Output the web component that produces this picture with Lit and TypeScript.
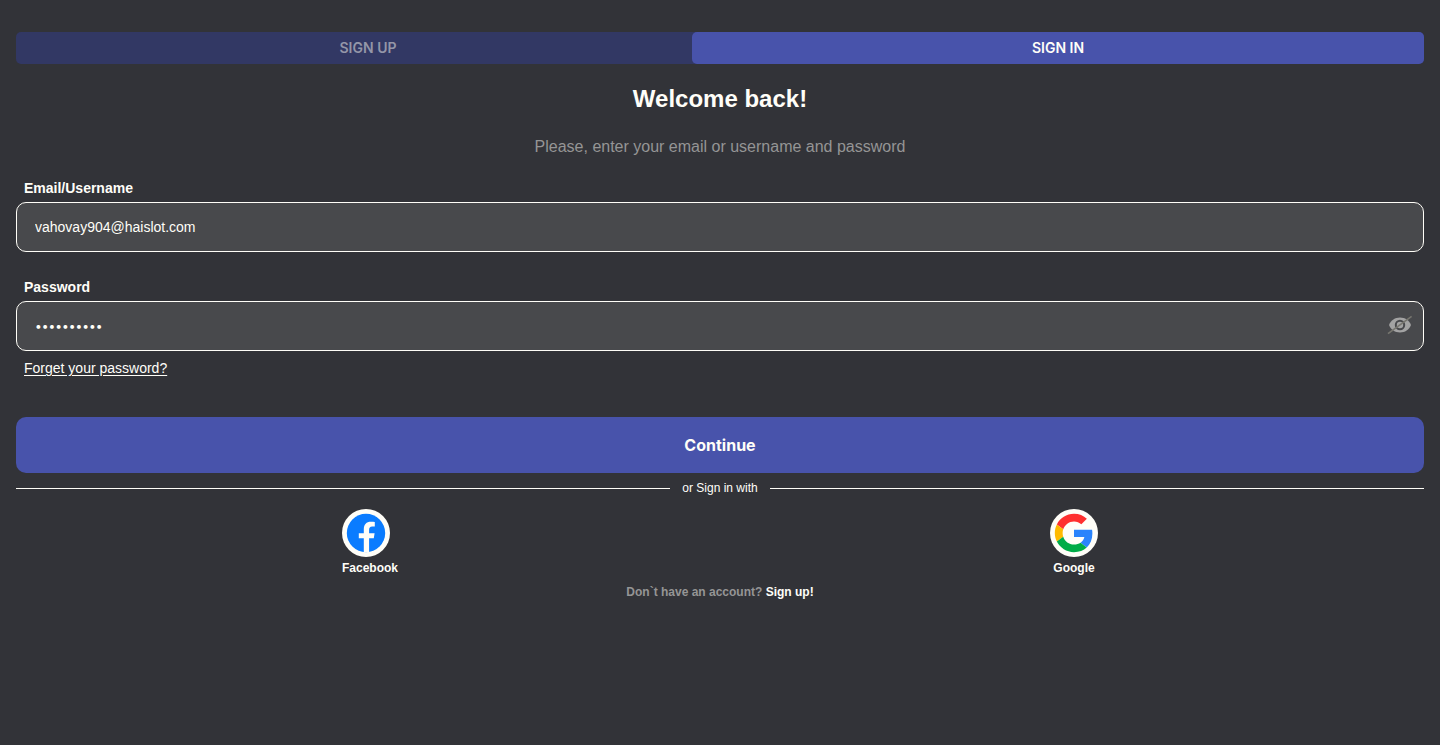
import { LitElement, html, css } from "lit";
import { customElement, state } from "lit/decorators.js";

@customElement("app-root")
export class AppRoot extends LitElement {
  @state() private passwordVisible = false;

  static styles = css`
    :host {
      display: block;
      box-sizing: border-box;
      min-height: 100vh;
      padding: 32px 16px;
      background: #323338;
      color: #fffef8;
      font-family: "Liberation Sans", Arial, sans-serif;
      font-size: 14px;
      line-height: 16px;
    }
    * {
      box-sizing: border-box;
    }
    button,
    input {
      margin: 0;
      padding: 0;
      border: 0;
      background: none;
      color: inherit;
      font-family: Inter, sans-serif;
      font-size: 14px;
    }
    button {
      cursor: pointer;
    }
    a {
      color: inherit;
    }
    .tabs {
      display: flex;
      border-radius: 5px;
      background: #323864;
    }
    .tab {
      flex: 0 0 50%;
      height: 32px;
      padding-bottom: 2px;
      border-radius: 5px;
      font-weight: 600;
      color: #9496a8;
    }
    .tab.active {
      flex: 1 0 50%;
      margin-left: -28px;
      background: #4853ab;
      color: #fffef8;
    }
    .title {
      margin: 21px 0 0;
      font-size: 24px;
      line-height: 28px;
      text-align: center;
    }
    .subtitle {
      margin: 24px 0 0;
      font-size: 16px;
      line-height: 20px;
      text-align: center;
      color: #959595;
    }
    .field {
      display: flex;
      flex-direction: column;
      gap: 6px;
      margin-top: 27px;
    }
    .subtitle + .field {
      margin-top: 23px;
    }
    .label {
      align-self: flex-start;
      padding-left: 8px;
      font-weight: bold;
    }
    .box {
      display: flex;
      align-items: center;
      height: 50px;
      padding: 0 10px 0 18px;
      border: 1px solid #fffef8;
      border-radius: 10px;
      background: #48494c;
    }
    .input {
      flex: 1;
      min-width: 0;
      height: 100%;
      outline: none;
      font-family: "Liberation Sans", Arial, sans-serif;
    }
    .input.masked {
      padding-bottom: 2px;
      font-family: Inter, sans-serif;
      font-size: 12px;
    }
    .eye {
      display: flex;
      padding-bottom: 2px;
      color: #a3a3a3;
    }
    .forgot {
      display: inline-block;
      margin: 9px 0 0 8px;
      text-underline-offset: 2px;
    }
    .submit {
      display: block;
      width: 100%;
      height: 56px;
      margin-top: 41px;
      border-radius: 10px;
      background: #4853ab;
      font-size: 16px;
      font-weight: 700;
    }
    .divider {
      display: flex;
      align-items: center;
      gap: 12px;
      margin-top: 7px;
      font-size: 12px;
    }
    .divider::before,
    .divider::after {
      content: "";
      flex: 1;
      height: 1px;
      background: #fffef8;
    }
    .providers {
      display: flex;
      justify-content: space-around;
      margin-top: 13px;
    }
    .provider {
      font: bold 12px/16px "Liberation Sans", Arial, sans-serif;
      text-align: center;
    }
    .logo {
      display: block;
      margin-bottom: 3px;
    }
    .footer {
      margin: 8px 0 0;
      font-size: 12px;
      font-weight: bold;
      text-align: center;
      color: #959595;
    }
    .footer a {
      color: #fffef8;
      text-decoration: none;
    }
  `;

  private togglePassword() {
    this.passwordVisible = !this.passwordVisible;
  }

  render() {
    return html`
      <nav class="tabs">
        <button class="tab" type="button">SIGN UP</button>
        <button class="tab active" type="button">SIGN IN</button>
      </nav>
      <form @submit=${(e: Event) => e.preventDefault()}>
        <h1 class="title">Welcome back!</h1>
        <p class="subtitle">Please, enter your email or username and password</p>
        <div class="field">
          <label class="label" for="login">Email/Username</label>
          <div class="box">
            <input class="input" id="login" type="text" .value=${"vahovay904@haislot.com"} />
          </div>
        </div>
        <div class="field">
          <label class="label" for="password">Password</label>
          <div class="box">
            <input
              class="input ${this.passwordVisible ? "" : "masked"}"
              id="password"
              type=${this.passwordVisible ? "text" : "password"}
              .value=${"abcdefghij"}
            />
            <button class="eye" type="button" aria-label="Show password" @click=${this.togglePassword}>
              <svg width="26" height="20" viewBox="0 0 26 20" aria-hidden="true">
                <path fill="currentColor" d="M2 10C4 5.2 8 2.5 13 2.5S22 5.2 24 10C22 14.8 18 17.5 13 17.5S4 14.8 2 10Z" />
                <circle cx="13" cy="10" r="4.2" fill="none" stroke="#48494c" stroke-width="2" />
                <path d="M1 18.6 24.6 1.4" stroke="#77766f" stroke-width="1.6" />
              </svg>
            </button>
          </div>
        </div>
        <a class="forgot" href="#forgot">Forget your password?</a>
        <button class="submit" type="submit">Continue</button>
      </form>
      <div class="divider">or Sign in with</div>
      <div class="providers">
        <button class="provider" type="button">
          <svg class="logo" width="48" height="48" viewBox="0 0 48 48" aria-hidden="true">
            <circle cx="24" cy="24" r="24" fill="#fffef8" />
            <circle cx="24" cy="24" r="19.2" fill="#0a7cff" />
            <path
              fill="#fffef8"
              d="M21.8 43.6V29.2H16.8V24.2H21.8V20.2C21.8 15.2 24.5 12.7 28.8 12.7C30.5 12.7 31.8 12.9 32.8 13.1V17.5H30.2C27.9 17.5 27.1 18.9 27.1 21V24.2H32.6L31.8 29.2H27.1V43.6Z"
            />
          </svg>
          Facebook
        </button>
        <button class="provider" type="button">
          <svg class="logo" width="48" height="48" viewBox="0 0 48 48" aria-hidden="true">
            <circle cx="24" cy="24" r="24" fill="#fffef8" />
            <g transform="translate(4.8 4.8) scale(0.8)">
              <path fill="#ff302f" d="M24 9.5c3.54 0 6.71 1.22 9.21 3.6l6.85-6.85C35.9 2.38 30.47 0 24 0 14.62 0 6.51 5.38 2.56 13.22l7.98 6.19C12.43 13.72 17.74 9.5 24 9.5z" />
              <path fill="#2a84fc" d="M46.98 24.55c0-1.57-.15-3.09-.38-4.55H24v9.02h12.94c-.58 2.96-2.26 5.48-4.78 7.18l7.73 6c4.51-4.18 7.09-10.36 7.09-17.65z" />
              <path fill="#ffba00" d="M10.53 28.59c-.48-1.45-.76-2.99-.76-4.59s.27-3.14.76-4.59l-7.98-6.19C.92 16.46 0 20.12 0 24c0 3.88.92 7.54 2.56 10.78l7.97-6.19z" />
              <path fill="#00ac47" d="M24 48c6.48 0 11.93-2.13 15.89-5.81l-7.73-6c-2.15 1.45-4.92 2.3-8.16 2.3-6.26 0-11.57-4.22-13.47-9.91l-7.98 6.19C6.51 42.62 14.62 48 24 48z" />
            </g>
          </svg>
          Google
        </button>
      </div>
      <p class="footer">Don\`t have an account? <a href="#signup">Sign up!</a></p>
    `;
  }
}
